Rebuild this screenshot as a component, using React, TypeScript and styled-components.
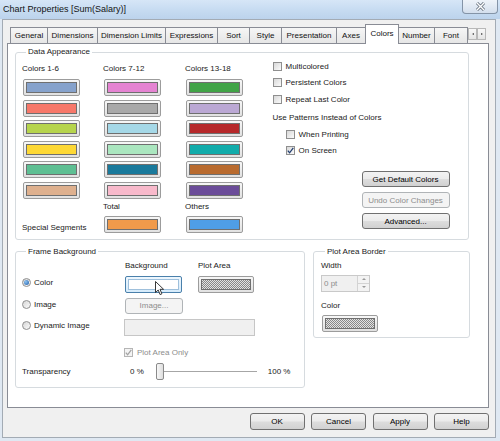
import styled, { createGlobalStyle } from "styled-components"

const GlobalStyle = createGlobalStyle`
	html, body {
		margin: 0;
		padding: 0;
		background: #fff;
	}
	body {
		font-family: "Liberation Sans", Arial, sans-serif;
		font-size: 8px;
		color: #1a1a1a;
	}
	* {
		box-sizing: border-box;
	}
`

const Window = styled.div`
	width: 500px;
	height: 441px;
	display: flex;
	flex-direction: column;
	background: #dfe8f2;
	overflow: hidden;
`

const TitleBar = styled.div`
	height: 19px;
	flex: none;
	display: flex;
	justify-content: space-between;
	align-items: flex-start;
	background: linear-gradient(180deg, #d6e6f7 0%, #c6dbf1 55%, #bcd3ec 100%);
`

const TitleText = styled.div`
	font-size: 9px;
	line-height: 19px;
	padding-left: 3px;
	color: #141414;
`

const CloseButton = styled.div`
	width: 36px;
	height: 14px;
	margin-right: 2px;
	border: 1px solid #8494a7;
	border-top: none;
	border-radius: 0 0 4px 4px;
	background: linear-gradient(180deg, #eef3f9, #d3dfed);
	display: flex;
	align-items: center;
	justify-content: center;
`

const Body = styled.div`
	flex: 1;
	display: flex;
	padding: 0 4px 3px 2px;
`

const Client = styled.div`
	flex: 1;
	display: flex;
	flex-direction: column;
	background: #f0f0f0;
	border: 1px solid #a3abb4;
	padding: 4px 6px 0 4px;
`

const TabStrip = styled.div`
	height: 19px;
	display: flex;
	align-items: flex-end;
	padding-left: 3px;
	position: relative;
	z-index: 1;
`

const Tab = styled.div<{ $w: number; $active?: boolean }>`
	width: ${(p) => p.$w + 1}px;
	height: ${(p) => (p.$active ? 20 : 16)}px;
	margin-right: -1px;
	margin-bottom: ${(p) => (p.$active ? -1 : 0)}px;
	padding-bottom: ${(p) => (p.$active ? 2 : 0)}px;
	border: 1px solid #898c95;
	border-bottom: none;
	background: ${(p) =>
		p.$active ? "#fff" : "linear-gradient(180deg, #f6f6f6 0%, #e6e6e6 100%)"};
	display: flex;
	align-items: center;
	justify-content: center;
	white-space: nowrap;
	color: #111;
	position: relative;
	z-index: ${(p) => (p.$active ? 2 : 1)};
`

const ScrollArrows = styled.div`
	display: flex;
	align-self: flex-start;
	margin: 4px 0 0 1px;
`

const ArrowButton = styled.div`
	width: 9px;
	height: 12px;
	border: 1px solid #b8b8b8;
	background: linear-gradient(180deg, #f8f8f8, #e4e4e4);
	display: flex;
	align-items: center;
	justify-content: center;
`

const Triangle = styled.span<{ $dir: "left" | "right" | "up" | "down"; $color?: string }>`
	width: 0;
	height: 0;
	border-style: solid;
	border-color: transparent;
	${(p) => {
		const c = p.$color ?? "#444"
		switch (p.$dir) {
			case "left":
				return `border-width: 1.5px 2px 1.5px 0; border-right-color: ${c};`
			case "right":
				return `border-width: 1.5px 0 1.5px 2px; border-left-color: ${c};`
			case "up":
				return `border-width: 0 2px 2px 2px; border-bottom-color: ${c};`
			default:
				return `border-width: 2px 2px 0 2px; border-top-color: ${c};`
		}
	}}
`

const Panel = styled.div`
	height: 365px;
	background: #fff;
	border: 1px solid #898c95;
	padding: 3px 0 0 7px;
	display: flex;
	flex-direction: column;
`

const Group = styled.fieldset<{ $w: number; $pb: number; $pl: number }>`
	width: ${(p) => p.$w}px;
	margin: 0;
	padding: 0 0 ${(p) => p.$pb}px ${(p) => p.$pl}px;
	border: 1px solid #d6dbdf;
	border-radius: 3px;
	min-inline-size: 0;
`

const Legend = styled.legend`
	padding: 0 2px;
	margin-left: 4px;
	line-height: 10px;
	font-size: 8px;
	color: #1a1a1a;
`

const GroupInner = styled.div`
	display: flex;
`

const ColorGrid = styled.div`
	display: grid;
	grid-template-columns: 81px 82px 87.5px;
	grid-template-rows: 11.5px repeat(6, 17px) 10px 17px;
	row-gap: 3.5px;
	margin-top: 7px;
`

const GridLabel = styled.div<{ $end?: boolean }>`
	line-height: 10px;
	white-space: nowrap;
	align-self: ${(p) => (p.$end ? "end" : "start")};
`

const Swatch = styled.div<{ $w?: number; $focus?: boolean }>`
	width: ${(p) => p.$w ?? 57}px;
	height: 17px;
	margin-left: 1px;
	padding: 2px;
	border: 1px solid ${(p) => (p.$focus ? "#4a80ab" : "#9c9c9c")};
	border-radius: 2px;
	background: ${(p) =>
		p.$focus
			? "linear-gradient(180deg, #eef7fe, #d5ebfb)"
			: "linear-gradient(180deg, #f7f7f7, #e1e1e1)"};
	position: relative;
`

const SwatchFill = styled.div<{ $color?: string; $pattern?: boolean; $light?: boolean }>`
	width: 100%;
	height: 100%;
	border: 1px solid ${(p) => (p.$light ? "#9fc0dc" : "#6f6f6f")};
	background: ${(p) =>
		p.$pattern
			? "repeating-conic-gradient(#888 0% 25%, #e2e2e2 0% 50%) 0 0 / 2px 2px"
			: p.$color ?? "#fff"};
`

const Cursor = styled.svg`
	position: absolute;
	left: 29px;
	top: 4px;
`

const RightCol = styled.div`
	display: flex;
	flex-direction: column;
	padding-top: 1px;
`

const CheckRow = styled.div<{ $indent?: number; $h?: number; $disabled?: boolean }>`
	display: flex;
	align-items: center;
	gap: 4px;
	height: ${(p) => p.$h ?? 16.5}px;
	padding-left: ${(p) => p.$indent ?? 0}px;
	white-space: nowrap;
	color: ${(p) => (p.$disabled ? "#8d8d8d" : "#1a1a1a")};
`

const Box = styled.span<{ $disabled?: boolean }>`
	width: 9px;
	height: 9px;
	flex: none;
	border: 1px solid ${(p) => (p.$disabled ? "#b5b5b5" : "#8f8f8f")};
	background: ${(p) =>
		p.$disabled ? "#f4f4f4" : "linear-gradient(135deg, #d8d8d8, #fbfbfb)"};
	display: flex;
	align-items: center;
	justify-content: center;
`

const RadioCircle = styled.span<{ $on?: boolean }>`
	width: 9px;
	height: 9px;
	flex: none;
	border-radius: 50%;
	border: 1px solid #8f8f8f;
	background: linear-gradient(135deg, #d6d6d6, #fbfbfb);
	display: flex;
	align-items: center;
	justify-content: center;
	&::after {
		content: "";
		display: ${(p) => (p.$on ? "block" : "none")};
		width: 5px;
		height: 5px;
		border-radius: 50%;
		background: radial-gradient(circle at 35% 35%, #8cc3f2, #1f5ba6);
	}
`

const SectionText = styled.div`
	margin-top: 2px;
	line-height: 16.5px;
	white-space: nowrap;
`

const ButtonStack = styled.div`
	display: flex;
	flex-direction: column;
	gap: 5px;
	margin: 12px 0 0 89px;
`

const DlgButton = styled.button<{ $w: number; $h?: number }>`
	width: ${(p) => p.$w}px;
	height: ${(p) => p.$h ?? 16}px;
	padding: 0;
	font: inherit;
	color: #000;
	border: 1px solid #707070;
	border-radius: 3px;
	background: linear-gradient(180deg, #f3f3f3 0%, #ebebeb 48%, #dddddd 52%, #d1d1d1 100%);
	white-space: nowrap;
	&:disabled {
		color: #8d8d8d;
		border-color: #b0b4b7;
		background: #f4f4f4;
	}
`

const BottomRow = styled.div`
	display: flex;
	align-items: flex-start;
	gap: 8px;
	margin-top: 6.5px;
`

const FormRow = styled.div<{ $top: number; $h: number }>`
	display: grid;
	grid-template-columns: 103px 73px 1fr;
	align-items: center;
	height: ${(p) => p.$h}px;
	margin-top: ${(p) => p.$top}px;
`

const RadioLabel = styled.div`
	display: flex;
	align-items: center;
	gap: 3px;
	height: 11px;
	align-self: start;
	margin-top: 1px;
	white-space: nowrap;
`

const Span = styled.div<{ $shift?: number }>`
	grid-column: 2 / 4;
	margin-left: ${(p) => p.$shift ?? 0}px;
	display: flex;
	align-items: center;
`

const TextField = styled.div<{ $w: number }>`
	width: ${(p) => p.$w}px;
	height: 17px;
	border: 1px solid #c6c6c6;
	background: #f0f0f0;
`

const Label = styled.div<{ $top?: number }>`
	line-height: 10px;
	margin-top: ${(p) => p.$top ?? 0}px;
	white-space: nowrap;
`

const SliderText = styled.span<{ $ml: number }>`
	margin-left: ${(p) => p.$ml}px;
	white-space: nowrap;
`

const Slider = styled.div`
	width: 101px;
	height: 20px;
	margin-left: 12px;
	display: flex;
	align-items: center;
`

const Thumb = styled.div`
	width: 8px;
	height: 17px;
	flex: none;
	border: 1px solid #8a8a8a;
	border-radius: 2px;
	background: linear-gradient(90deg, #f7f7f7, #dedede);
`

const Track = styled.div`
	flex: 1;
	height: 2px;
	border-top: 1px solid #a6a6a6;
	border-bottom: 1px solid #fff;
	background: #dcdcdc;
`

const Spinner = styled.div`
	width: 49px;
	height: 17px;
	margin-top: 4px;
	border: 1px solid #c9c9c9;
	background: #f0f0f0;
	display: flex;
`

const SpinText = styled.div`
	flex: 1;
	padding-left: 2px;
	line-height: 15px;
	color: #8c8c8c;
`

const SpinButtons = styled.div`
	width: 12px;
	display: flex;
	flex-direction: column;
	border-left: 1px solid #d3d3d3;
`

const SpinHalf = styled.div`
	flex: 1;
	display: flex;
	align-items: center;
	justify-content: center;
	background: #f3f3f3;
	& + & {
		border-top: 1px solid #d3d3d3;
	}
`

const ButtonBar = styled.div`
	display: flex;
	justify-content: flex-end;
	gap: 6.5px;
	margin-top: 5px;
`

const tabs = [
	["General", 37],
	["Dimensions", 50],
	["Dimension Limits", 68],
	["Expressions", 52],
	["Sort", 32],
	["Style", 32],
	["Presentation", 55],
	["Axes", 29],
	["Colors", 33],
	["Number", 36],
	["Font", 33],
] as const

const colorRows = [
	["#86a2cc", "#e583d2", "#41a447"],
	["#f7786a", "#a9a9a9", "#bba8d4"],
	["#b6d44d", "#a5d8e7", "#b6282a"],
	["#fdd835", "#aae6bf", "#12acab"],
	["#5ebf93", "#1a7a9c", "#b96b2f"],
	["#deb08e", "#f8b9cb", "#6b4c99"],
]

function Check({ color = "#233f70" }: { color?: string }) {
	return (
		<svg width="7" height="7" viewBox="0 0 7 7">
			<path d="M0.8 3.6 L2.6 5.8 L6.3 0.8" fill="none" stroke={color} strokeWidth="1.3" />
		</svg>
	)
}

function CheckItem({
	label,
	checked,
	indent,
	disabled,
}: {
	label: string
	checked?: boolean
	indent?: number
	disabled?: boolean
}) {
	return (
		<CheckRow $indent={indent} $disabled={disabled}>
			<Box $disabled={disabled}>{checked && <Check color={disabled ? "#a3a3a3" : undefined} />}</Box>
			{label}
		</CheckRow>
	)
}

export default function App() {
	return (
		<>
			<GlobalStyle />
			<Window>
				<TitleBar>
					<TitleText>Chart Properties [Sum(Salary)]</TitleText>
					<CloseButton>
						<svg width="11" height="9" viewBox="0 0 11 9">
							<path d="M2 1 L9 8 M9 1 L2 8" stroke="#66717e" strokeWidth="3" />
							<path d="M2 1 L9 8 M9 1 L2 8" stroke="#fff" strokeWidth="1.4" />
						</svg>
					</CloseButton>
				</TitleBar>
				<Body>
					<Client>
						<TabStrip>
							{tabs.map(([name, w]) => (
								<Tab key={name} $w={w} $active={name === "Colors"}>
									{name}
								</Tab>
							))}
							<ScrollArrows>
								<ArrowButton>
									<Triangle $dir="left" />
								</ArrowButton>
								<ArrowButton>
									<Triangle $dir="right" />
								</ArrowButton>
							</ScrollArrows>
						</TabStrip>
						<Panel>
							<Group $w={454} $pb={6.5} $pl={6}>
								<Legend>Data Appearance</Legend>
								<GroupInner>
									<ColorGrid>
										<GridLabel>Colors 1-6</GridLabel>
										<GridLabel>Colors 7-12</GridLabel>
										<GridLabel>Colors 13-18</GridLabel>
										{colorRows.flat().map((c, i) => (
											<Swatch key={i}>
												<SwatchFill $color={c} />
											</Swatch>
										))}
										<div />
										<GridLabel>Total</GridLabel>
										<GridLabel>Others</GridLabel>
										<GridLabel $end>Special Segments</GridLabel>
										<Swatch>
											<SwatchFill $color="#f09a4b" />
										</Swatch>
										<Swatch>
											<SwatchFill $color="#4f9ee6" />
										</Swatch>
									</ColorGrid>
									<RightCol>
										<CheckItem label="Multicolored" />
										<CheckItem label="Persistent Colors" />
										<CheckItem label="Repeat Last Color" />
										<SectionText>Use Patterns Instead of Colors</SectionText>
										<CheckItem label="When Printing" indent={13} />
										<CheckItem label="On Screen" indent={13} checked />
										<ButtonStack>
											<DlgButton $w={88}>Get Default Colors</DlgButton>
											<DlgButton $w={88} disabled>
												Undo Color Changes
											</DlgButton>
											<DlgButton $w={88}>Advanced...</DlgButton>
										</ButtonStack>
									</RightCol>
								</GroupInner>
							</Group>
							<BottomRow>
								<Group $w={290} $pb={5.5} $pl={6}>
									<Legend>Frame Background</Legend>
									<FormRow $top={4} $h={10}>
										<div />
										<Label>Background</Label>
										<Label>Plot Area</Label>
									</FormRow>
									<FormRow $top={5} $h={17}>
										<RadioLabel>
											<RadioCircle $on />
											Color
										</RadioLabel>
										<Swatch $w={57} $focus style={{ marginLeft: 0 }}>
											<SwatchFill $light />
											<Cursor width="10" height="15" viewBox="0 0 10 15">
												<path
													d="M0.5 0.5 L0.5 11.5 L3.2 9 L5.1 13.6 L6.9 12.8 L5 8.3 L8.6 8.3 Z"
													fill="#fff"
													stroke="#222"
													strokeWidth="0.9"
													strokeLinejoin="round"
												/>
											</Cursor>
										</Swatch>
										<Swatch $w={56} style={{ marginLeft: 0 }}>
											<SwatchFill $pattern />
										</Swatch>
									</FormRow>
									<FormRow $top={5} $h={16}>
										<RadioLabel>
											<RadioCircle />
											Image
										</RadioLabel>
										<DlgButton $w={58} disabled>
											Image...
										</DlgButton>
									</FormRow>
									<FormRow $top={5} $h={17}>
										<RadioLabel>
											<RadioCircle />
											Dynamic Image
										</RadioLabel>
										<Span $shift={-1}>
											<TextField $w={131} />
										</Span>
									</FormRow>
									<FormRow $top={9} $h={10}>
										<div />
										<Span $shift={-1}>
											<CheckItem label="Plot Area Only" checked disabled />
										</Span>
									</FormRow>
									<FormRow $top={7} $h={20}>
										<Label>Transparency</Label>
										<Span>
											<SliderText $ml={5}>0 %</SliderText>
											<Slider>
												<Thumb />
												<Track />
											</Slider>
											<SliderText $ml={11}>100 %</SliderText>
										</Span>
									</FormRow>
								</Group>
								<Group $w={157} $pb={5} $pl={7}>
									<Legend>Plot Area Border</Legend>
									<Label $top={4}>Width</Label>
									<Spinner>
										<SpinText>0 pt</SpinText>
										<SpinButtons>
											<SpinHalf>
												<Triangle $dir="up" $color="#9a9a9a" />
											</SpinHalf>
											<SpinHalf>
												<Triangle $dir="down" $color="#9a9a9a" />
											</SpinHalf>
										</SpinButtons>
									</Spinner>
									<Label $top={9}>Color</Label>
									<Swatch $w={56} style={{ marginTop: 4 }}>
										<SwatchFill $pattern />
									</Swatch>
								</Group>
							</BottomRow>
						</Panel>
						<ButtonBar>
							<DlgButton $w={55} $h={17}>OK</DlgButton>
							<DlgButton $w={55} $h={17}>Cancel</DlgButton>
							<DlgButton $w={55} $h={17}>Apply</DlgButton>
							<DlgButton $w={55} $h={17}>Help</DlgButton>
						</ButtonBar>
					</Client>
				</Body>
			</Window>
		</>
	)
}
